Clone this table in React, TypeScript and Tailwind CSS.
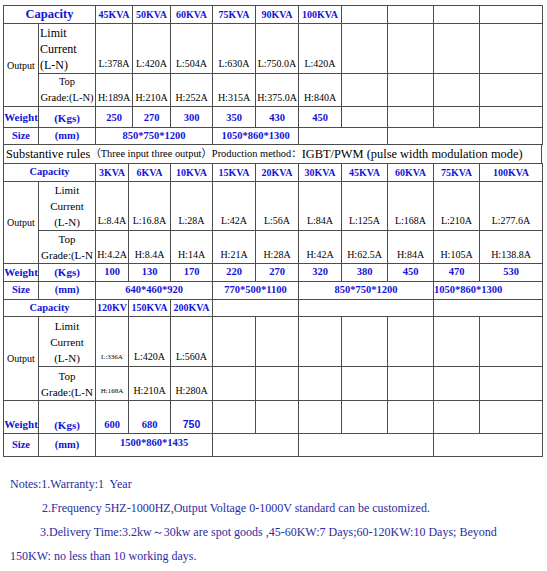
import React from 'react';

const cell = 'border border-[#4d4d4d] p-0 text-center';
const blue = 'text-[#1414d6] font-bold';

const t1Cols = [35, 57, 37, 38, 42, 43, 43, 43, 46, 46, 46, 63];
const t2Cols = [35, 57, 33, 42, 42, 43, 43, 43, 46, 46, 46, 63];

function Cols({ widths }: { widths: number[] }) {
  return (
    <colgroup>
      {widths.map((w, i) => (
        <col key={i} style={{ width: w }} />
      ))}
    </colgroup>
  );
}

function Empty({ n, className = '' }: { n: number; className?: string }) {
  return (
    <>
      {Array.from({ length: n }).map((_, i) => (
        <td key={i} className={`${cell} ${className}`} />
      ))}
    </>
  );
}

const t1 = {
  kva: ['45KVA', '50KVA', '60KVA', '75KVA', '90KVA', '100KVA'],
  low: ['L:378A', 'L:420A', 'L:504A', 'L:630A', 'L:750.0A', 'L:420A'],
  high: ['H:189A', 'H:210A', 'H:252A', 'H:315A', 'H:375.0A', 'H:840A'],
  kgs: ['250', '270', '300', '350', '430', '450'],
};

const t2 = {
  kva: ['3KVA', '6KVA', '10KVA', '15KVA', '20KVA', '30KVA', '45KVA', '60KVA', '75KVA', '100KVA'],
  low: ['L:8.4A', 'L:16.8A', 'L:28A', 'L:42A', 'L:56A', 'L:84A', 'L:125A', 'L:168A', 'L:210A', 'L:277.6A'],
  high: ['H:4.2A', 'H:8.4A', 'H:14A', 'H:21A', 'H:28A', 'H:42A', 'H:62.5A', 'H:84A', 'H:105A', 'H:138.8A'],
  kgs: ['100', '130', '170', '220', '270', '320', '380', '450', '470', '530'],
};

export default function App() {
  return (
    <div className="w-[547px] min-h-[571px] bg-white pt-[5px] font-['Liberation_Serif','Times_New_Roman',serif] text-black">
      {/* first table: 45-100KVA */}
      <table className="ml-[3px] w-[539px] table-fixed border-collapse">
        <Cols widths={t1Cols} />
        <tbody>
          <tr className="h-[18px]">
            <td colSpan={2} className={`${cell} ${blue} text-[12.5px] leading-none`}>Capacity</td>
            {t1.kva.map((k) => (
              <td key={k} className={`${cell} ${blue} text-[10px] leading-none`}>{k}</td>
            ))}
            <Empty n={4} />
          </tr>
          <tr className="h-[50px]">
            <td rowSpan={2} className={`${cell} text-[10px]`}>Output</td>
            <td className={`${cell} !text-left pl-[1px] text-[12px] leading-[16px]`}>
              Limit
              <br />
              Current
              <br />
              (L-N)
            </td>
            {t1.low.map((v, i) => (
              <td key={i} className={`${cell} align-bottom pb-[2px] text-[10px] leading-[14px] whitespace-nowrap`}>{v}</td>
            ))}
            <Empty n={4} />
          </tr>
          <tr className="h-[33px]">
            <td className={`${cell} text-[10.5px] leading-[16px] whitespace-nowrap`}>
              Top
              <br />
              Grade:(L-N)
            </td>
            {t1.high.map((v, i) => (
              <td key={i} className={`${cell} align-bottom pb-[1px] text-[10px] leading-[14px] whitespace-nowrap`}>{v}</td>
            ))}
            <Empty n={4} />
          </tr>
          <tr className="h-[21px]">
            <td className={`${cell} ${blue} text-[11px] leading-none`}>Weight</td>
            <td className={`${cell} ${blue} text-[11px] leading-none pt-[3px]`}>(Kgs)</td>
            {t1.kgs.map((v, i) => (
              <td key={i} className={`${cell} ${blue} text-[10.5px] leading-none pt-[3px]`}>{v}</td>
            ))}
            <Empty n={4} />
          </tr>
          <tr className="h-[17px]">
            <td className={`${cell} ${blue} text-[10.5px] leading-none`}>Size</td>
            <td className={`${cell} ${blue} text-[10.5px] leading-none`}>(mm)</td>
            <td colSpan={3} className={`${cell} ${blue} text-[10.5px] leading-none`}>850*750*1200</td>
            <td colSpan={2} className={`${cell} ${blue} text-[10.5px] leading-none whitespace-nowrap`}>1050*860*1300</td>
            <td colSpan={2} className={cell} />
            <td colSpan={3} className={cell} />
          </tr>
        </tbody>
      </table>

      <div className="ml-[3px] flex h-[18px] w-[539px] items-center whitespace-nowrap border-x border-[#4d4d4d] pl-[2px] leading-none">
        <span className="text-[12.3px]">Substantive rules</span>
        <span className="text-[10.4px] font-['Liberation_Serif','Noto_Sans_CJK_SC',serif]">（Three input three output）Production method：</span>
        <span className="text-[12.4px]">IGBT/PWM (pulse width modulation mode)</span>
      </div>

      {/* second and third tables share one grid */}
      <table className="ml-[3px] w-[539px] table-fixed border-collapse">
        <Cols widths={t2Cols} />
        <tbody>
          <tr className="h-[18px]">
            <td colSpan={2} className={`${cell} ${blue} text-[10.5px] leading-none`}>Capacity</td>
            {t2.kva.map((k) => (
              <td key={k} className={`${cell} ${blue} text-[10px] leading-none`}>{k}</td>
            ))}
          </tr>
          <tr className="h-[49px]">
            <td rowSpan={2} className={`${cell} text-[10px]`}>Output</td>
            <td className={`${cell} text-[11px] leading-[16px]`}>
              Limit
              <br />
              Current
              <br />
              (L-N)
            </td>
            {t2.low.map((v, i) => (
              <td key={i} className={`${cell} align-bottom pb-[2px] text-[10px] leading-[14px] whitespace-nowrap`}>{v}</td>
            ))}
          </tr>
          <tr className="h-[33px]">
            <td className={`${cell} text-[11px] leading-[16px] whitespace-nowrap`}>
              Top
              <br />
              Grade:(L-N
            </td>
            {t2.high.map((v, i) => (
              <td key={i} className={`${cell} align-bottom pb-[1px] text-[10px] leading-[14px] whitespace-nowrap`}>{v}</td>
            ))}
          </tr>
          <tr className="h-[18px]">
            <td className={`${cell} ${blue} text-[11px] leading-none`}>Weight</td>
            <td className={`${cell} ${blue} text-[11px] leading-none`}>(Kgs)</td>
            {t2.kgs.map((v, i) => (
              <td key={i} className={`${cell} ${blue} text-[10.5px] leading-none`}>{v}</td>
            ))}
          </tr>
          <tr className="h-[18px]">
            <td className={`${cell} ${blue} text-[10.5px] leading-none`}>Size</td>
            <td className={`${cell} ${blue} text-[10.5px] leading-none`}>(mm)</td>
            <td colSpan={3} className={`${cell} ${blue} text-[10.5px] leading-none`}>640*460*920</td>
            <td colSpan={2} className={`${cell} ${blue} text-[10.5px] leading-none whitespace-nowrap`}>770*500*1100</td>
            <td colSpan={3} className={`${cell} ${blue} text-[10.5px] leading-none`}>850*750*1200</td>
            <td colSpan={2} className={`${cell} ${blue} !text-left text-[10.5px] leading-none whitespace-nowrap`}>1050*860*1300</td>
          </tr>

          <tr className="h-[17px]">
            <td colSpan={2} className={`${cell} ${blue} text-[10.5px] leading-none`}>Capacity</td>
            <td className={`${cell} ${blue} text-[10px] leading-none whitespace-nowrap`}>120KV</td>
            <td className={`${cell} ${blue} text-[10px] leading-none whitespace-nowrap`}>150KVA</td>
            <td className={`${cell} ${blue} text-[10px] leading-none whitespace-nowrap`}>200KVA</td>
            <td colSpan={2} className={cell} />
            <td colSpan={3} className={cell} />
            <td colSpan={2} className={cell} />
          </tr>
          <tr className="h-[50px]">
            <td rowSpan={2} className={`${cell} text-[10px]`}>Output</td>
            <td className={`${cell} text-[11px] leading-[16px]`}>
              Limit
              <br />
              Current
              <br />
              (L-N)
            </td>
            <td className={`${cell} align-bottom pb-[2px] text-[7px] leading-[14px] whitespace-nowrap`}>L:336A</td>
            <td className={`${cell} align-bottom pb-[2px] text-[10px] leading-[14px] whitespace-nowrap`}>L:420A</td>
            <td className={`${cell} align-bottom pb-[2px] text-[10px] leading-[14px] whitespace-nowrap`}>L:560A</td>
            <Empty n={7} />
          </tr>
          <tr className="h-[34px]">
            <td className={`${cell} text-[11px] leading-[16px] whitespace-nowrap`}>
              Top
              <br />
              Grade:(L-N
            </td>
            <td className={`${cell} align-bottom pb-[2px] text-[7px] leading-[14px] whitespace-nowrap`}>H:168A</td>
            <td className={`${cell} align-bottom pb-[2px] text-[10px] leading-[14px] whitespace-nowrap`}>H:210A</td>
            <td className={`${cell} align-bottom pb-[2px] text-[10px] leading-[14px] whitespace-nowrap`}>H:280A</td>
            <Empty n={7} />
          </tr>
          <tr className="h-[33px]">
            <td className={`${cell} ${blue} align-bottom pb-[3px] text-[11px] leading-none`}>Weight</td>
            <td className={`${cell} ${blue} align-bottom pb-[2px] text-[11px] leading-none`}>(Kgs)</td>
            <td className={`${cell} ${blue} align-bottom pb-[3px] text-[10.5px] leading-none`}>600</td>
            <td className={`${cell} ${blue} align-bottom pb-[3px] text-[10.5px] leading-none`}>680</td>
            <td className={`${cell} ${blue} align-bottom pb-[4px] font-['Liberation_Sans',Arial,sans-serif] text-[10.5px] leading-none`}>750</td>
            <Empty n={7} />
          </tr>
          <tr className="h-[23px]">
            <td className={`${cell} ${blue} text-[10.5px] leading-none`}>Size</td>
            <td className={`${cell} ${blue} text-[10.5px] leading-none`}>(mm)</td>
            <td colSpan={3} className={`${cell} ${blue} text-[10.5px] leading-none pb-[4px]`}>1500*860*1435</td>
            <td colSpan={2} className={cell} />
            <td colSpan={3} className={cell} />
            <td colSpan={2} className={cell} />
          </tr>
        </tbody>
      </table>

      <div className="mt-[15px] text-[12px] leading-[24px] text-[#2b2ba3] whitespace-nowrap">
        <p className="pl-[10px]">Notes:1.Warranty:1&nbsp; Year</p>
        <p className="pl-[42px]">2.Frequency 5HZ-1000HZ,Output Voltage 0-1000V standard can be customized.</p>
        <p className="pl-[40px]">3.Delivery Time:3.2kw～30kw are spot goods ,45-60KW:7 Days;60-120KW:10 Days; Beyond</p>
        <p className="pl-[10px]">150KW: no less than 10 working days.</p>
      </div>
    </div>
  );
}
